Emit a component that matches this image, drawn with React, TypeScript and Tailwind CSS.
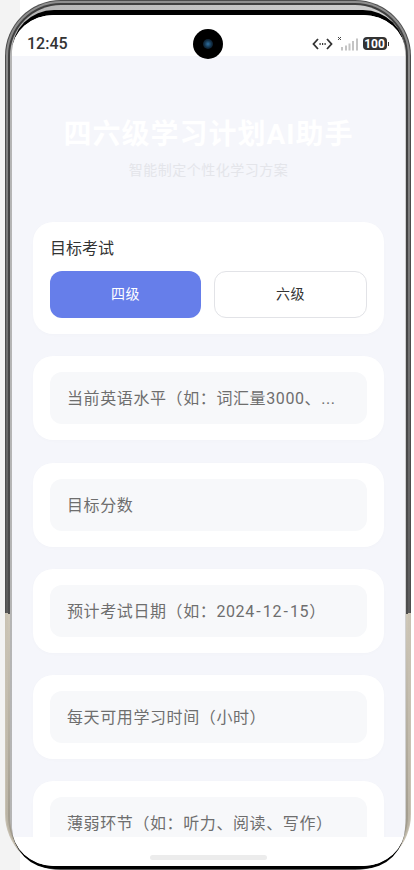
import type { ReactNode } from "react";

const cjk = "font-['Roboto','Noto_Sans_CJK_SC','Noto_Sans',sans-serif]";

function Field({ children }: { children: ReactNode }) {
  return (
    <div className="rounded-[20px] bg-white px-[17px] py-[16px] shadow-[0_1px_4px_rgba(0,0,0,0.015)]">
      <div className="flex h-[52px] items-center rounded-[12px] bg-[#f7f8fa] pl-[17px] pr-[17px] pt-[2px]">
        <span className="whitespace-nowrap text-[16px] leading-[24px] tracking-[0.6px] text-[#6e6e6e]">{children}</span>
      </div>
    </div>
  );
}

function StatusIcons() {
  return (
    <div className="flex items-center">
      <svg width="21" height="14" viewBox="0 0 21 14" fill="none" stroke="#333" strokeWidth="1.8">
        <path d="M6 2 1.5 7 6 12M15 2l4.5 5-4.5 5" />
        <path d="M7.5 7h1.2M10 7h1.2M12.5 7h1.2" />
      </svg>
      <svg width="25" height="16" viewBox="0 0 25 16" className="ml-[4px]">
        <path d="M1 1l3 3M4 1L1 4" stroke="#444" strokeWidth="1" />
        <rect x="4" y="11" width="2" height="3.5" fill="#c4c4c4" />
        <rect x="8" y="9.5" width="2" height="5" fill="#c4c4c4" />
        <rect x="11.5" y="7.5" width="2" height="7" fill="#c4c4c4" />
        <rect x="15" y="5" width="2" height="9.5" fill="#c4c4c4" />
        <rect x="19" y="2.5" width="2" height="12" fill="#c4c4c4" />
      </svg>
      <div className="ml-[1px] flex h-[13px] w-[24px] items-center justify-center rounded-[4px] bg-[#333333] text-[12px] font-bold leading-none text-white">
        100
      </div>
      <div className="ml-[1px] h-[4px] w-[1.5px] bg-[#333333]" />
    </div>
  );
}

export default function App() {
  return (
    <div className={`relative h-[870px] w-[414px] overflow-hidden bg-white ${cjk}`}>
      <div className="absolute left-0 top-0 h-[870px] w-[20px] bg-[#f3f3f3]" />
      {/* Phone frame */}
      <div className="relative ml-[5px] h-[870px] w-[406px] rounded-[56px] bg-[linear-gradient(to_bottom,#4d4d4d_0%,#4d4d4d_70.5%,#c8c1b2_70.5%,#c8c1b2_97%,#555_100%)] p-[1px]">
        <div className="h-full w-full rounded-[55px] bg-[linear-gradient(to_bottom,#8f8f8f_0%,#5a5a5a_70.5%,#cbc4b5_70.5%,#b9b2a3_97%,#777_100%)] p-[2px] pb-0">
          <div className="h-full w-full rounded-[53px] bg-[linear-gradient(to_bottom,#3f3f3f_0%,#4d4d4d_70.5%,#cfc8b9_70.5%,#a09a8c_96%,#222_100%)] p-[2px] pb-0">
            <div className="h-full w-full rounded-[51px] bg-[linear-gradient(to_right,#b5b5b5,#d0d0d0)] pl-[2px] pr-[1px] pt-[5px] pb-0">
              <div className="flex h-full w-full flex-col overflow-hidden rounded-[42px] border-t-[5px] border-b-[3px] border-black bg-white">
                {/* Status bar */}
                <div className="relative flex h-[41px] shrink-0 items-center justify-between bg-white pl-[15px] pr-[16px] pt-[16px]">
                  <span className="text-[16px] font-medium text-[#333333]">12:45</span>
                  <div className="absolute left-[181px] top-[14px] flex h-[30px] w-[30px] items-center justify-center rounded-full bg-black">
                    <div className="h-[10px] w-[10px] rounded-full bg-[radial-gradient(circle,#2f6f9f_0%,#123048_50%,#05070c_100%)]" />
                  </div>
                  <StatusIcons />
                </div>
                {/* Scrolling page */}
                <div className="min-h-0 flex-1 overflow-hidden bg-[#f5f6fb] px-[21px]">
                  <div className="pt-[60px] text-center">
                    <h1 className="text-[28px] font-bold leading-[38px] tracking-[1px] text-white">四六级学习计划AI助手</h1>
                    <p className="mt-[6px] text-[14px] leading-[20px] tracking-[0.5px] text-[#e4e5ea]">智能制定个性化学习方案</p>
                  </div>
                  <div className="mt-[42px] flex flex-col gap-[22.25px]">
                    <div className="rounded-[20px] bg-white px-[17px] pb-[16px] pt-[15px] shadow-[0_1px_4px_rgba(0,0,0,0.015)]">
                      <div className="text-[16px] font-normal leading-[24px] text-[#333333]">目标考试</div>
                      <div className="mt-[10px] flex gap-[13px]">
                        <button className="h-[47px] flex-1 rounded-[12px] bg-[#667eea] text-[14px] tracking-[0.5px] text-white">四级</button>
                        <button className="h-[47px] flex-1 rounded-[12px] border border-[#e2e3e7] bg-white text-[14px] tracking-[0.5px] text-[#333333]">六级</button>
                      </div>
                    </div>
                    <Field>当前英语水平（如：词汇量3000、...</Field>
                    <Field>目标分数</Field>
                    <Field>
                      预计考试日期（如：2024<span className="mx-[1.5px]">-</span>12<span className="mx-[1.5px]">-</span>15）
                    </Field>
                    <Field>每天可用学习时间（小时）</Field>
                    <Field>薄弱环节（如：听力、阅读、写作）</Field>
                  </div>
                </div>
                {/* Bottom safe area */}
                <div className="flex h-[29px] shrink-0 items-start justify-center bg-white pt-[18px]">
                  <div className="h-[5px] w-[117px] rounded-full bg-[#ececec]" />
                </div>
              </div>
            </div>
          </div>
        </div>
      </div>
    </div>
  );
}
